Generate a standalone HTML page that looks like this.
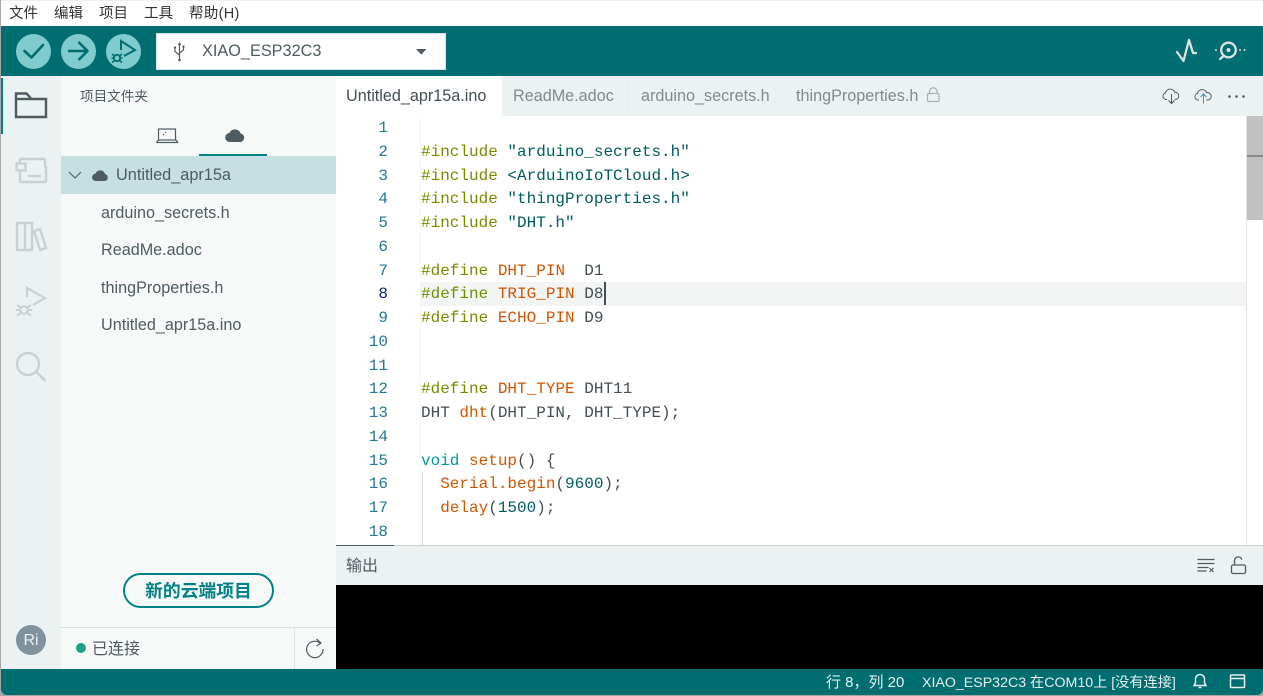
<!DOCTYPE html>
<html><head><meta charset="utf-8"><style>
*{box-sizing:border-box}
html,body{margin:0;padding:0;width:1263px;height:696px;overflow:hidden;background:#a8a8a8}
body{position:relative;font-family:"Liberation Sans","Noto Sans CJK SC",sans-serif;color:#4e5b61}
.a{position:absolute;white-space:nowrap}
svg{position:absolute;overflow:visible}
.m{top:6px;font-size:14.5px;color:#333;line-height:16px}
.f{left:101px;font-size:16.2px;color:#4e5b61;line-height:20px}
.t{top:86px;font-size:16.2px;line-height:20px;color:#7f8c8d}
.n{width:52px;left:336px;text-align:right;font:16px/24px "Liberation Mono",monospace;color:#237893}
.c{left:421px;font:16px/24px "Liberation Mono",monospace;color:#434f54;white-space:pre}
.g{color:#728e00}.o{color:#d35400}.s{color:#005c5f}.b{color:#00979d}.d{color:#4e5b61}
</style></head><body>
<div class="a" style="left:1px;top:0;width:1262px;height:1px;background:#eee"></div>
<div class="a" style="left:1px;top:1px;width:1262px;height:25px;background:#fff"></div>
<div class="a m" style="left:9px">文件</div>
<div class="a m" style="left:54px">编辑</div>
<div class="a m" style="left:99px">项目</div>
<div class="a m" style="left:144px">工具</div>
<div class="a m" style="left:189px;letter-spacing:.3px">帮助(H)</div>

<div class="a" style="left:1px;top:26px;width:1262px;height:50px;background:#006d70"></div>
<div class="a" style="left:16px;top:34px;width:35px;height:35px;border-radius:50%;background:#7fcbcd"></div>
<div class="a" style="left:61px;top:34px;width:35px;height:35px;border-radius:50%;background:#7fcbcd"></div>
<div class="a" style="left:106px;top:34px;width:35px;height:35px;border-radius:50%;background:#7fcbcd"></div>
<svg style="left:0;top:0" width="150" height="76" fill="none" stroke="#006d70" stroke-width="2.6">
<path d="M24.500 51l7 6.500L43 45" stroke-linecap="round" stroke-linejoin="round"/>
<path d="M68 51h18M78.500 42l9 9-9 9" stroke-width="2.600" stroke-linejoin="round"/>
<path d="M121 50V41l14 9-11 6" stroke-width="2"/>
<circle cx="117" cy="58" r="3.200" stroke-width="1.800"/>
<path d="M112 54l2.500 2M122 54l-2.500 2M111.500 58h2.500M120 58h2.500M112 62.500l2.500-2M122 62.500l-2.500-2" stroke-width="1.500"/>
</svg>
<div class="a" style="left:156px;top:33px;width:290px;height:37px;background:#fff;border:1px solid #dae3e3"></div>
<svg style="left:172px;top:42px" width="16" height="20" fill="none" stroke="#4e5b61" stroke-width="1.200">
<path d="M7.500 1v17M3 6v3.500l4.500 3.500M11.500 5v3l-4 3"/><path d="M7.500 0l-1.800 3h3.600z" fill="#4e5b61" stroke="none"/><circle cx="7.500" cy="18" r="1.300" fill="#4e5b61" stroke="none"/><circle cx="3" cy="5.500" r="1.100" fill="#4e5b61" stroke="none"/><rect x="10.500" y="3.500" width="2" height="2" fill="#4e5b61" stroke="none"/>
</svg>
<div class="a" style="left:202px;top:41px;font-size:16.300px;line-height:20px;color:#4e5b61">XIAO_ESP32C3</div>
<svg style="left:416px;top:49px" width="11" height="6"><path d="M0 0h10.500l-5.200 5.500z" fill="#4e5b61"/></svg>
<svg style="left:1170px;top:36px" width="90" height="30" fill="none" stroke="#dae3e3" stroke-linecap="round">
<path d="M7 16l6.500 9L19 4l4 13h3" stroke-width="2.300" stroke-linejoin="round"/>
<circle cx="58.500" cy="14" r="7.300" stroke-width="2.300"/><circle cx="58.500" cy="14" r="2" fill="#dae3e3" stroke="none"/>
<path d="M53.500 20l-3.500 3" stroke-width="2.300"/>
<circle cx="46" cy="14" r="1" fill="#dae3e3" stroke="none"/><circle cx="70" cy="14" r="1" fill="#dae3e3" stroke="none"/><circle cx="74.500" cy="14" r="1" fill="#dae3e3" stroke="none"/>
</svg>

<div class="a" style="left:1px;top:76px;width:60px;height:593px;background:#ecf1f1"></div>
<div class="a" style="left:1px;top:78px;width:2px;height:56px;background:#008184"></div>
<svg style="left:0;top:76px" width="61" height="320" fill="none" stroke="#4e5b61" stroke-width="2.400">
<path d="M16 41V17.500h10.500l5 5.500H46V41z"/><path d="M16 23h15"/>
<g stroke="#c9d2d2" stroke-width="2.400">
<path d="M20 87V84a1 1 0 0 1 1-1H44l1 1v6l1 1v14l-1 1H21a1 1 0 0 1-1-1V94"/><rect x="16.500" y="87.500" width="9" height="7"/><path d="M28 100h13"/>
<path d="M17 147v27h8v-27zM25 147v27h7v-27zM34 155l6-2 6 19-6 2z"/>
<path d="M27 221V212L45 222 33 229" stroke-width="2.200"/><circle cx="24" cy="234" r="3.800" stroke-width="2.200"/><path d="M17 229l3.500 2.500M31 229l-3.500 2.500M16 234h3M29 234h3M17 239.500l3.500-2.500M31 239.500l-3.500-2.500" stroke-width="2"/>
<circle cx="28" cy="288" r="11" stroke-width="2.400"/><path d="M36.500 296l9 9" stroke-width="2.400"/></g>
</svg>
<div class="a" style="left:16px;top:625px;width:30px;height:30px;border-radius:50%;background:#7f929e;color:#e8eef0;font-size:16px;line-height:31px;text-align:center">Ri</div>

<div class="a" style="left:61px;top:76px;width:275px;height:593px;background:#f7f9f9"></div>
<div class="a" style="left:80px;top:88px;font-size:13.600px;line-height:18px;color:#4e5b61">项目文件夹</div>
<svg style="left:156px;top:127px" width="24" height="18" fill="none" stroke="#4e5b61" stroke-width="1.200">
<rect x="2.500" y="2" width="17" height="11"/><path d="M0.500 15.500h21.500M0.500 15.500l2-2.500M22 15.500l-2-2.500" stroke-width="1.300"/><path d="M7 8l1-1M9 6l1-1" stroke-width="1"/></svg>
<svg style="left:225px;top:128px" width="21" height="15"><path d="M5 14a4.500 4.500 0 0 1-.6-9 6 6 0 0 1 11.200 0.500 4.300 4.300 0 0 1 0 8.500z" fill="#4e5b61"/></svg>
<div class="a" style="left:199px;top:154px;width:68px;height:2px;background:#008184"></div>
<div class="a" style="left:61px;top:156px;width:275px;height:38px;background:#c6e0e1"></div>
<svg style="left:68px;top:171px" width="14" height="9"><path d="M1 1l6 6 6-6" fill="none" stroke="#4e5b61" stroke-width="1.100"/></svg>
<svg style="left:92px;top:169px" width="18" height="13"><path d="M4 12a3.700 3.700 0 0 1-.5-7.400 5 5 0 0 1 9.500.4 3.600 3.600 0 0 1 0 7z" fill="#4e5b61"/></svg>
<div class="a" style="left:116px;top:165px;font-size:16.300px;line-height:20px;color:#4e5b61">Untitled_apr15a</div>
<div class="a f" style="top:203px">arduino_secrets.h</div>
<div class="a f" style="top:240px">ReadMe.adoc</div>
<div class="a f" style="top:278px">thingProperties.h</div>
<div class="a f" style="top:315px">Untitled_apr15a.ino</div>
<div class="a" style="left:123px;top:573px;width:151px;height:35px;border:2px solid #008184;border-radius:18px;background:#f7f9f9;color:#008184;font-size:17.800px;font-weight:700;line-height:32px;text-align:center">新的云端项目</div>
<div class="a" style="left:61px;top:627px;width:275px;height:1px;background:#dae3e3"></div>
<div class="a" style="left:294px;top:628px;width:1px;height:41px;background:#dae3e3"></div>
<div class="a" style="left:76px;top:643px;width:10px;height:10px;border-radius:50%;background:#1da086"></div>
<div class="a" style="left:92px;top:640px;font-size:16px;line-height:20px;color:#4e5b61">已连接</div>
<svg style="left:304px;top:638px" width="22" height="22" fill="none" stroke="#4e5b61" stroke-width="1.200"><path d="M16.500 5.500A8.200 8.200 0 1 0 19 11"/><path d="M12.500 1l4.500 4-4.500 3" stroke-width="1.200"/></svg>

<div class="a" style="left:336px;top:76px;width:927px;height:40px;background:#ecf1f1"></div>
<div class="a" style="left:336px;top:76px;width:166px;height:40px;background:#fff"></div>
<div class="a t" style="left:346px;color:#434f54">Untitled_apr15a.ino</div>
<div class="a" style="left:628px;top:76px;width:1px;height:40px;background:#e8eeee"></div>
<div class="a t" style="left:513px">ReadMe.adoc</div>
<div class="a t" style="left:641px">arduino_secrets.h</div>
<div class="a" style="left:782px;top:76px;width:1px;height:40px;background:#e8eeee"></div>
<div class="a" style="left:958px;top:76px;width:1px;height:40px;background:#e8eeee"></div>
<div class="a t" style="left:796px">thingProperties.h</div>
<svg style="left:926px;top:87px" width="15" height="16" fill="none" stroke="#a9b2b3" stroke-width="1.200"><rect x="1.500" y="6.500" width="11.500" height="8" rx="1"/><path d="M3.500 6.500V4.500a3.700 3.700 0 0 1 7.500 0v2"/></svg>
<svg style="left:1162px;top:87px" width="90" height="18" fill="none" stroke="#4e5b61" stroke-width="1">
<path d="M5 12.500H4a3.300 3.300 0 0 1-.5-6.500 4.800 4.800 0 0 1 9.200-.8 3.700 3.700 0 0 1 1.500 7.200h-1.500"/><path d="M9.500 7v9M6.500 13.500l3 3 3-3"/>
<path d="M37 13h-1a3.300 3.300 0 0 1-.5-6.500 4.800 4.800 0 0 1 9.200-.8 3.700 3.700 0 0 1 1.500 7.300h-2"/><path d="M41.500 16.500V7M38.500 10l3-3 3 3" stroke="#3f8cb0"/>
<circle cx="67.500" cy="9.500" r="1.300" fill="#4e5b61" stroke="none"/><circle cx="74.500" cy="9.500" r="1.300" fill="#4e5b61" stroke="none"/><circle cx="81.500" cy="9.500" r="1.300" fill="#4e5b61" stroke="none"/>
</svg>

<div class="a" style="left:336px;top:116px;width:927px;height:429px;background:#fff"></div>
<div class="a" style="left:420px;top:116px;width:1px;height:429px;background:#f3f5f5"></div>
<div class="a" style="left:421px;top:282px;width:825px;height:24px;background:#f3f5f5"></div>
<div class="a" style="left:422px;top:472px;width:1px;height:73px;background:#d3d3d3"></div>
<div class="a" style="left:1246px;top:116px;width:1px;height:429px;background:#e3e3e3"></div>
<div class="a" style="left:1247px;top:116px;width:16px;height:104px;background:#c1c1c1"></div>
<div class="a" style="left:1247px;top:155px;width:16px;height:2px;background:#8a8a8a"></div>
<div class="a n" style="top:116px">1</div>
<div class="a n" style="top:140px">2</div>
<div class="a n" style="top:164px">3</div>
<div class="a n" style="top:187px">4</div>
<div class="a n" style="top:211px">5</div>
<div class="a n" style="top:235px">6</div>
<div class="a n" style="top:259px">7</div>
<div class="a n" style="top:282px;color:#0b216f">8</div>
<div class="a n" style="top:306px">9</div>
<div class="a n" style="top:330px">10</div>
<div class="a n" style="top:354px">11</div>
<div class="a n" style="top:377px">12</div>
<div class="a n" style="top:401px">13</div>
<div class="a n" style="top:425px">14</div>
<div class="a n" style="top:449px">15</div>
<div class="a n" style="top:472px">16</div>
<div class="a n" style="top:496px">17</div>
<div class="a n" style="top:520px">18</div>
<div class="a c" style="top:140px"><span class="g">#include</span> <span class="s">"arduino_secrets.h"</span></div>
<div class="a c" style="top:164px"><span class="g">#include</span> <span class="s">&lt;ArduinoIoTCloud.h&gt;</span></div>
<div class="a c" style="top:187px"><span class="g">#include</span> <span class="s">"thingProperties.h"</span></div>
<div class="a c" style="top:211px"><span class="g">#include</span> <span class="s">"DHT.h"</span></div>
<div class="a c" style="top:259px"><span class="g">#define</span> <span class="o">DHT_PIN</span>  D1</div>
<div class="a c" style="top:282px"><span class="g">#define</span> <span class="o">TRIG_PIN</span> D8</div>
<div class="a" style="left:604px;top:282px;width:2px;height:23px;background:#434f54"></div>
<div class="a c" style="top:306px"><span class="g">#define</span> <span class="o">ECHO_PIN</span> D9</div>
<div class="a c" style="top:377px"><span class="g">#define</span> <span class="o">DHT_TYPE</span> DHT11</div>
<div class="a c" style="top:401px">DHT <span class="o">dht</span>(DHT_PIN, DHT_TYPE);</div>
<div class="a c" style="top:449px"><span class="b">void</span> <span class="o">setup</span>() {</div>
<div class="a c" style="top:472px">  <span class="o">Serial.begin</span>(<span class="s">9600</span>);</div>
<div class="a c" style="top:496px">  <span class="o">delay</span>(<span class="s">1500</span>);</div>

<div class="a" style="left:336px;top:545px;width:927px;height:40px;background:#ecf1f1;border-top:1px solid #ccd2d2"></div>
<div class="a" style="left:336px;top:545px;width:58px;height:1px;background:#4e5b61"></div>
<div class="a" style="left:346px;top:557px;font-size:16px;line-height:20px;color:#4e5b61">输出</div>
<svg style="left:1196px;top:556px" width="52" height="20" fill="none" stroke="#4e5b61" stroke-width="1.200">
<path d="M1.500 3.500h17M1.500 7.500h17M1.500 11.500h11M1.500 15h9M13.500 12l4 4M17.500 12l-4 4"/>
<rect x="35.500" y="9" width="14" height="8.500" rx="1.500" stroke-width="1.300"/><path d="M38.500 9V4.500a3.700 3.700 0 0 1 7.300-.8" stroke-width="1.300"/>
</svg>
<div class="a" style="left:336px;top:585px;width:927px;height:84px;background:#000"></div>

<div class="a" style="left:1px;top:669px;width:1262px;height:26px;background:#006d70;border-bottom-left-radius:6px;border-bottom-right-radius:6px"></div>
<div class="a" style="left:826px;top:674px;font-size:15px;line-height:18px;color:#e8f0f0">行 8，列 20</div>
<div class="a" style="left:922px;top:674px;font-size:14.200px;line-height:18px;color:#e8f0f0">XIAO_ESP32C3 在COM10上 [没有连接]</div>
<svg style="left:1192px;top:672px" width="52" height="20" fill="none" stroke="#e8f0f0" stroke-width="1.500">
<path d="M2 13.500h12l-1.500-2.500V7a4.500 4.500 0 0 0-9 0v4zM6.500 15.500h3"/>
<rect x="38.500" y="3" width="14" height="12.500" rx="0.500"/><path d="M38.500 6.500h14"/>
</svg>
</body></html>
